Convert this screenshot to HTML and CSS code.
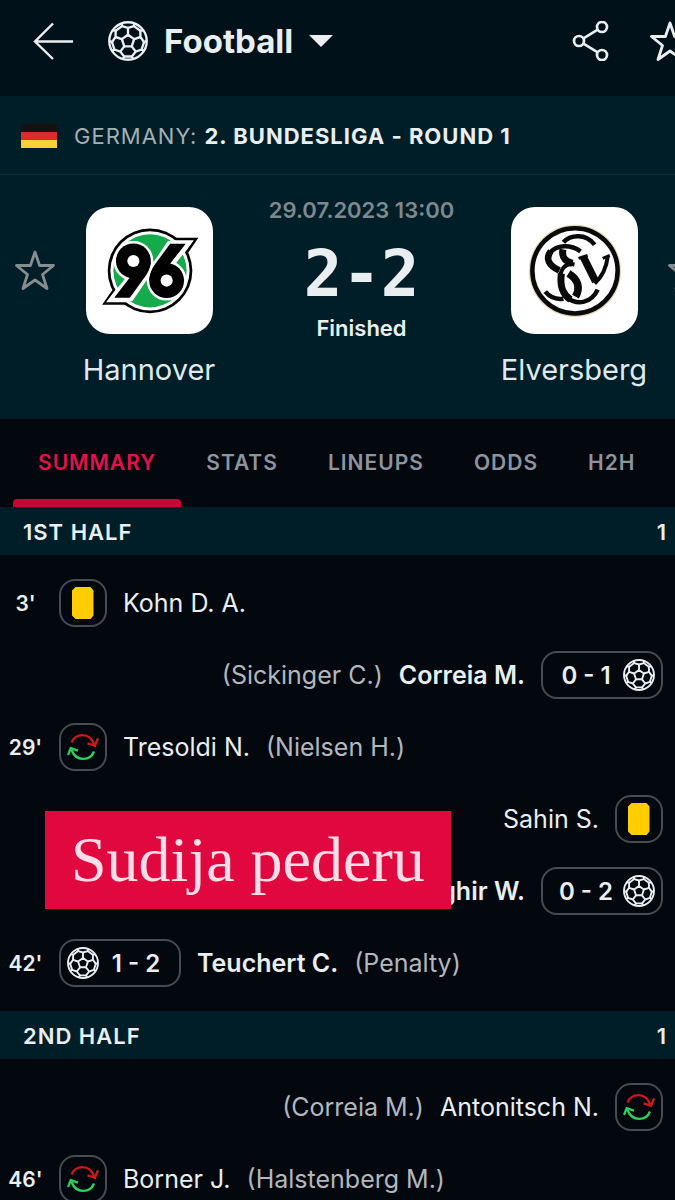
FILE: index.html
```html
<!DOCTYPE html>
<html lang="en">
<head>
<meta charset="utf-8">
<meta name="viewport" content="width=device-width, initial-scale=1">
<title>Hannover - Elversberg</title>
<link rel="stylesheet" href="styles.css">
</head>
<body>
<svg class="defs" aria-hidden="true">
  <symbol id="ball" viewBox="0 0 32 32">
    <g fill="none" stroke="currentColor" stroke-width="1.900" stroke-linejoin="round">
      <circle cx="16" cy="16" r="15"/>
      <path d="M16 11l4.900 3.500-1.900 5.800h-6l-1.900-5.800z"/>
      <path d="M16 11V5.500M20.900 14.500L26 12.800M19 20.300l3.200 4.200M13 20.300l-3.200 4.200M11.100 14.500L6 12.800"/>
      <path d="M11 1.800l.2 2.300L16 5.500l4.800-1.400.2-2.300M28.200 7.400l-2.400.4.2 5 2.800 4.100 2.100-.9M28.600 24l-1.700-1.200-4.700 1.700-3.100 3.900 1 2M11.900 30.400l1-2-3.100-3.900-4.700-1.700L3.400 24M1.100 16l2.100.9L6 12.800l.2-5-2.400-.4"/>
      <path d="M20.800 4.100l5 3.700M28.800 16.900l-1.900 5.900M19.100 28.400h-6.200M5.100 22.800l-1.900-5.900M6.200 7.800l5-3.700"/>
    </g>
  </symbol>
  <symbol id="sub" viewBox="0 0 32 32">
    <g fill="none" stroke-width="2.300">
      <path stroke="#d3161c" d="M4.700 11.500C8 2 22.500 1 27 13M31 7.300L28 14.800L20.500 12.300"/>
      <path stroke="#2fd05a" d="M27 20.500C23.500 30 9 31 4.500 19M1 24L3.700 17.200L11 19.700"/>
    </g>
  </symbol>
  <symbol id="card" viewBox="0 0 32 32">
    <path fill="#ffcd00" d="M8.500 0h12L26.500 3.500v25L23.500 32h-15L5 28.500v-25zM20 0h3.500L26.500 3.500z"/>
  </symbol>
  <symbol id="star" viewBox="0 0 40 40">
    <path fill="none" stroke="currentColor" stroke-width="2.800" stroke-linejoin="round" d="M20 2l4.600 13.500L38.500 15.500 27.500 24.500 32 38.500 20 30 8 38.500 12.500 24.500 1.500 15.500 15.400 15.500z"/>
  </symbol>
</svg>

<div class="app">
  <header class="topbar">
    <button class="icon-btn back" aria-label="Back">
      <svg class="icon-lg" viewBox="0 0 40 40"><path fill="none" stroke="currentColor" stroke-width="2.400" d="M20 2.500L2 20.500L20 38M2 20.500H40"/></svg>
    </button>
    <button class="sport">
      <svg class="icon-lg"><use href="#ball"/></svg>
      <span>Football</span>
      <svg class="caret" viewBox="0 0 24 12"><path fill="currentColor" d="M0 0h24L12 12z"/></svg>
    </button>
    <button class="icon-btn share" aria-label="Share">
      <svg class="icon-lg" viewBox="0 0 40 40"><g fill="none" stroke="currentColor" stroke-width="2.700"><circle cx="8" cy="20" r="5"/><circle cx="31" cy="6" r="5"/><circle cx="31" cy="34" r="5"/><path d="M12.500 17.300L26.700 8.700M12.500 22.700L26.700 31.300"/></g></svg>
    </button>
    <button class="icon-btn" aria-label="Add to favourites"><svg class="icon-lg"><use href="#star"/></svg></button>
  </header>

  <a class="league" href="#league">
    <svg class="flag" viewBox="0 0 36 24"><path fill="#17120f" d="M0 0h36v8H0z"/><path fill="#dd2a2a" d="M0 8h36v8H0z"/><path fill="#fbd036" d="M0 16h36v8H0z"/></svg>
    <span>GERMANY: <strong>2. BUNDESLIGA - ROUND 1</strong></span>
  </a>

  <section class="match">
    <button class="icon-btn fav" aria-label="Follow Hannover"><svg class="icon-lg"><use href="#star"/></svg></button>
    <div class="team">
      <svg class="crest" viewBox="0 0 126 126">
        <path d="M87 30.500h24.500L99.500 48zM40 97H16l12.500-18z"/>
        <circle cx="63.500" cy="63.300" r="42"/>
        <path fill="#fff" d="M80 33h27L93 52zM47 94.500H20L34 76z"/>
        <circle cx="63.500" cy="63.300" r="39.300" fill="#fff"/>
        <circle cx="63.500" cy="63.300" r="36.300" fill="#15aa4b"/>
        <path fill="#fff" d="M81 34h25L86 60 65 58zM46 93.500H21L42 67l20 3z"/>
        <g stroke="#fff" stroke-width="5" stroke-linejoin="round">
          <circle cx="47" cy="53.500" r="17.300"/><path d="M64.300 54Q64 62 58 70L43.500 90H28L45 68z"/>
          <circle cx="80" cy="73" r="17.300"/><path d="M62.700 73Q63 64 69 56L83.500 36.500H99L82 58z"/>
        </g>
        <circle cx="47" cy="53.500" r="17.300"/><path d="M64.300 54Q64 62 58 70L43.500 90H28L45 68z"/>
        <circle cx="80" cy="73" r="17.300"/><path d="M62.700 73Q63 64 69 56L83.500 36.500H99L82 58z"/>
        <circle cx="47" cy="53.500" r="6" fill="#fff"/><circle cx="80" cy="73" r="6" fill="#fff"/>
      </svg>
      <span class="team-name">Hannover</span>
    </div>
    <div class="result">
      <time class="kickoff" datetime="2023-07-29T13:00">29.07.2023 13:00</time>
      <span class="score">2-2</span>
      <span class="status">Finished</span>
    </div>
    <div class="team">
      <svg class="crest" viewBox="0 0 126 126">
        <circle cx="63.500" cy="63.300" r="45.800" fill="#e3d8b5"/>
        <circle cx="63.500" cy="63.300" r="42.300" fill="#fff" stroke="#0b0a0a" stroke-width="4.500"/>
        <g fill="none" stroke="#0b0a0a">
          <path stroke-width="4.500" d="M52 35C58 28 74 25 83 37.500"/>
          <path stroke-width="4.500" d="M69 44C59 37 45 37 38.500 46"/>
          <path stroke-width="6.500" d="M39.500 44C34 51 37 58 48 63"/>
          <path stroke-width="7" d="M51.500 42C50 51 54 54 61 56"/>
          <path stroke-width="4" d="M63 57C54 55 49 62 49 70"/>
          <path stroke-width="7" d="M50 66C48 80 52 87 59 92"/>
          <path stroke-width="4.500" d="M56 90C66 98 80 95 86 82"/>
          <path stroke-width="7.500" d="M57 66C67 72 69 80 64 89"/>
          <path stroke-width="4.500" d="M34 84C39 90 45 92 52 91"/>
          <path stroke-width="7.500" d="M72 50L84 74"/>
          <path stroke-width="4" d="M83 76Q94 66 96 49"/>
          <path stroke-width="3" d="M67 51L76 48M91 51L98 48"/>
        </g>
      </svg>
      <span class="team-name">Elversberg</span>
    </div>
    <button class="icon-btn fav" aria-label="Follow Elversberg"><svg class="icon-lg"><use href="#star"/></svg></button>
  </section>

  <nav class="tabs">
    <a class="tab active" href="#summary" aria-current="page">SUMMARY</a>
    <a class="tab" href="#stats">STATS</a>
    <a class="tab" href="#lineups">LINEUPS</a>
    <a class="tab" href="#odds">ODDS</a>
    <a class="tab" href="#h2h">H2H</a>
  </nav>

  <main>
    <h2 class="half"><span>1ST HALF</span><span>1</span></h2>
    <ul class="events">
      <li class="event"><span class="minute">3'</span><span class="pill"><svg class="icon"><use href="#card"/></svg></span><span>Kohn D. A.</span></li>
      <li class="event away"><span class="pill goal"><span>0 - 1</span><svg class="icon"><use href="#ball"/></svg></span><strong>Correia M.</strong><span class="note">(Sickinger C.)</span></li>
      <li class="event"><span class="minute">29'</span><span class="pill"><svg class="icon"><use href="#sub"/></svg></span><span>Tresoldi N.</span><span class="note">(Nielsen H.)</span></li>
      <li class="event away"><span class="pill"><svg class="icon"><use href="#card"/></svg></span><span>Sahin S.</span></li>
      <li class="event away"><span class="pill goal"><span>0 - 2</span><svg class="icon"><use href="#ball"/></svg></span><strong>Faghir W.</strong></li>
      <li class="event"><span class="minute">42'</span><span class="pill goal"><svg class="icon"><use href="#ball"/></svg><span>1 - 2</span></span><strong>Teuchert C.</strong><span class="note">(Penalty)</span></li>
    </ul>
    <h2 class="half"><span>2ND HALF</span><span>1</span></h2>
    <ul class="events">
      <li class="event away"><span class="pill"><svg class="icon"><use href="#sub"/></svg></span><span>Antonitsch N.</span><span class="note">(Correia M.)</span></li>
      <li class="event"><span class="minute">46'</span><span class="pill"><svg class="icon"><use href="#sub"/></svg></span><span>Borner J.</span><span class="note">(Halstenberg M.)</span></li>
    </ul>
  </main>
</div>
<p class="caption">Sudija pederu</p>
</body>
</html>
```

FILE: styles.css
```css
* {
  box-sizing: border-box;
}

body {
  position: relative;
  height: 100vh;
  margin: 0;
  overflow: hidden;
  background: #02080d;
  color: #e9eef1;
  font-family: Inter, "Liberation Sans", sans-serif;
  font-size: 25px;
}

button {
  padding: 0;
  border: 0;
  background: none;
  color: inherit;
  font: inherit;
}

a {
  color: inherit;
  text-decoration: none;
}

svg {
  display: block;
  flex: none;
}

.defs {
  display: none;
}

/* The app canvas is slightly wider than the viewport and runs off its right edge. */
.app {
  width: calc(100% + 48px);
}

.icon-lg {
  width: 40px;
  height: 40px;
}

.icon {
  width: 32px;
  height: 32px;
}

.topbar {
  display: flex;
  align-items: center;
  height: 96px;
  padding: 0 33px 14px;
  background: #01111a;
}

.sport {
  display: flex;
  align-items: center;
  gap: 16px;
  margin-left: 35px;
  font-size: 33px;
  font-weight: 700;
}

.caret {
  width: 24px;
  height: 12px;
}

.share {
  margin: 0 39px 0 auto;
}

.league {
  display: flex;
  align-items: center;
  gap: 17px;
  height: 79px;
  padding: 2px 0 0 21px;
  border-bottom: 1px solid #0c2d3c;
  background: #001e28;
  color: #a3b0b5;
  font-size: 22px;
  letter-spacing: 1px;
}

.league strong {
  color: #e9eef1;
  font-weight: 700;
}

.flag {
  width: 36px;
  height: 24px;
}

.match {
  display: grid;
  grid-template-columns: 70px 158px 1fr 158px 70px;
  height: 244px;
  padding-top: 20px;
  background: #001e28;
}

.fav {
  align-self: start;
  justify-self: center;
  padding-top: 55px;
  color: #858d91;
}

.team {
  display: flex;
  flex-direction: column;
  align-items: center;
  gap: 20px;
  padding-top: 12px;
}

.crest {
  width: 127px;
  height: 127px;
  border-radius: 24px;
  background: #fff;
}

.team-name {
  color: #dfe9ee;
  font-size: 29px;
  line-height: 32px;
}

.result {
  display: flex;
  flex-direction: column;
  align-items: center;
  font-size: 22px;
  font-weight: 600;
  line-height: 30px;
}

.kickoff {
  color: #7e898e;
}

.score {
  padding: 21px 0 11px;
  font-family: "DejaVu Sans Mono", monospace;
  font-size: 64px;
  font-weight: 700;
  line-height: 56px;
}

.tabs {
  display: flex;
  height: 88px;
  padding-left: 13px;
  color: #8f939d;
  font-size: 21px;
  font-weight: 600;
  letter-spacing: 1px;
}

.tab {
  position: relative;
  padding: 0 25px;
  line-height: 88px;
}

.tab.active {
  color: #e5104c;
}

.tab.active::after {
  content: "";
  position: absolute;
  right: 0;
  bottom: 0;
  left: 0;
  height: 8px;
  border-radius: 4px 4px 0 0;
  background: #c80037;
}

.half {
  display: flex;
  align-items: center;
  justify-content: space-between;
  height: 48px;
  margin: 0;
  padding: 1px 56px 0 23px;
  background: #001e28;
  font-size: 22px;
  font-weight: 600;
  letter-spacing: 1px;
}

.events {
  margin: 0;
  padding: 12px 0;
  list-style: none;
}

.event {
  display: flex;
  align-items: center;
  gap: 16px;
  height: 72px;
}

.event.away {
  flex-direction: row-reverse;
  padding-right: 60px;
}

.event strong {
  font-weight: 600;
}

.minute {
  width: 51px;
  margin-right: -8px;
  font-size: 21px;
  font-weight: 600;
  text-align: center;
}

.pill {
  display: flex;
  align-items: center;
  height: 48px;
  padding: 0 6px;
  border: 2px solid #474b54;
  border-radius: 16px;
  font-size: 24px;
  font-weight: 600;
}

.goal {
  width: 122px;
  justify-content: space-between;
}

.goal > span {
  flex: 1;
  text-align: center;
}

.note {
  color: #b3b7bd;
}

.caption {
  position: absolute;
  top: 811px;
  left: 45px;
  margin: 0;
  padding: 0 26px;
  background: #e1083f;
  color: #ffdce6;
  font-family: "Liberation Serif", serif;
  font-size: 64px;
  line-height: 98px;
}
```
